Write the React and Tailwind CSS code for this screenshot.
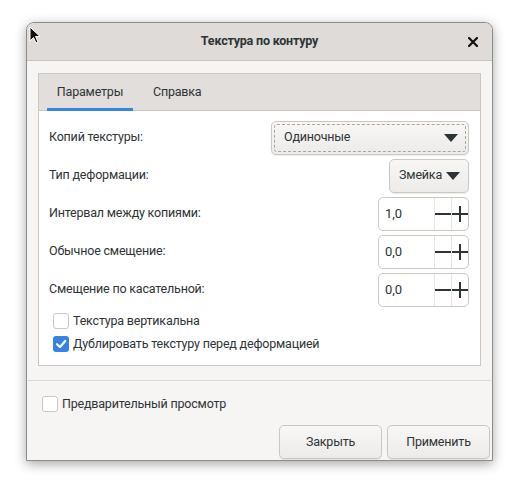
import React from "react";

const font = { fontFamily: 'Roboto, "Noto Sans", sans-serif' };

function Arrow() {
  return (
    <svg width="14" height="8" viewBox="0 0 14 8"><path d="M0 0 L14 0 L7 8 Z" fill="#2e3436" /></svg>
  );
}

function Spin({ value }) {
  return (
    <div className="flex h-[34px] w-[91px] rounded-[5px] border border-[#cdc7c2] bg-white overflow-hidden">
      <div className="flex-1 flex items-center pl-[6px] text-[13px] text-[#2e3436]">{value}</div>
      <div className="w-[17px] border-l border-[#e6e3e0] flex items-center justify-center">
        <svg width="16" height="16" viewBox="0 0 16 16"><rect x="0" y="7" width="16" height="2" fill="#2e3436" /></svg>
      </div>
      <div className="w-[17px] border-l border-[#e6e3e0] flex items-center justify-center">
        <svg width="16" height="16" viewBox="0 0 16 16"><rect x="0" y="7" width="16" height="2" fill="#2e3436" /><rect x="7" y="0" width="2" height="16" fill="#2e3436" /></svg>
      </div>
    </div>
  );
}

function Row({ label, children }) {
  return (
    <div className="flex items-center justify-between h-[33px]">
      <span className="text-[12.5px] tracking-[-0.2px] text-[#2e3436]">{label}</span>
      {children}
    </div>
  );
}

function Check({ checked, label }) {
  return (
    <div className="flex items-center gap-[4px] h-[20px]">
      {checked ? (
        <div className="w-[16px] h-[16px] rounded-[3px] bg-[#3584e4] flex items-center justify-center">
          <svg width="12" height="12" viewBox="0 0 12 12"><path d="M2 6.2 L5 9 L10.2 3" stroke="white" strokeWidth="2.2" fill="none" strokeLinecap="round" strokeLinejoin="round" /></svg>
        </div>
      ) : (
        <div className="w-[16px] h-[16px] rounded-[3px] border border-[#cdc7c2] bg-white" />
      )}
      <span className="text-[12.5px] tracking-[-0.2px] text-[#2e3436]">{label}</span>
    </div>
  );
}

export default function App() {
  return (
    <div className="relative w-[518px] h-[489px] bg-white overflow-hidden" style={font}>
      <div className="absolute left-[26px] top-[22px] w-[467px] h-[439px] rounded-t-[8px] border border-[#8e8c89] bg-[#f6f5f4] shadow-[0_3px_12px_rgba(0,0,0,0.35)] flex flex-col overflow-hidden">
        <div className="relative h-[38px] bg-[#dedbd8] border-b border-[#c8c4c0] flex items-center justify-center shrink-0">
          <span className="text-[12.5px] tracking-[-0.2px] font-bold text-[#2e3436]">Текстура по контуру</span>
          <svg className="absolute right-[14px] top-[14px]" width="10" height="10" viewBox="0 0 10 10">
            <path d="M1 1 L9 9 M9 1 L1 9" stroke="#111" strokeWidth="2.2" strokeLinecap="square" />
          </svg>
        </div>
        <div className="pt-[12px] px-[11px]">
          <div className="h-[293px] border border-[#cdc7c2] bg-white flex flex-col">
            <div className="h-[37px] bg-[#e1dedb] border-b border-[#cdc7c2] flex pl-[8px] shrink-0">
              <div className="relative w-[86px] flex items-center justify-center text-[12.5px] tracking-[-0.2px] text-[#2e3436]">
                Параметры
                <div className="absolute left-0 right-0 bottom-[-1px] h-[3px] bg-[#3584e4]" />
              </div>
              <div className="flex items-center pl-[20px] text-[12.5px] tracking-[-0.2px] text-[#2e3436]">Справка</div>
            </div>
            <div className="pt-[10px] pl-[10px] pr-[11px] flex flex-col gap-[5px]">
              <Row label="Копий текстуры:">
                <div className="w-[198px] h-[34px] rounded-[5px] border border-[#cdc7c2] bg-gradient-to-b from-[#f8f7f6] to-[#edebe9] shadow-[0_1px_1px_rgba(0,0,0,0.08)] p-[2px]">
                  <div className="h-full rounded-[3px] border border-dashed border-[#a8a5a2] flex items-center justify-between pl-[9px] pr-[7px] text-[12.5px] tracking-[-0.2px] text-[#2e3436]">
                    Одиночные
                    <Arrow />
                  </div>
                </div>
              </Row>
              <Row label="Тип деформации:">
                <div className="w-[80px] h-[34px] rounded-[5px] border border-[#cdc7c2] bg-gradient-to-b from-[#f8f7f6] to-[#edebe9] shadow-[0_1px_1px_rgba(0,0,0,0.08)] flex items-center justify-end gap-[4px] pr-[8px] text-[12.5px] tracking-[-0.2px] text-[#2e3436]">
                  Змейка
                  <Arrow />
                </div>
              </Row>
              <Row label="Интервал между копиями:"><Spin value="1,0" /></Row>
              <Row label="Обычное смещение:"><Spin value="0,0" /></Row>
              <Row label="Смещение по касательной:"><Spin value="0,0" /></Row>
              <div className="flex flex-col gap-[3px] pl-[4px]">
                <Check label="Текстура вертикальна" />
                <Check checked label="Дублировать текстуру перед деформацией" />
              </div>
            </div>
          </div>
        </div>
        <div className="mt-[14px] mx-[1px] h-px bg-[#dcd8d4]" />
        <div className="pl-[15px] pt-[13px]">
          <Check label="Предварительный просмотр" />
        </div>
        <div className="flex justify-end gap-[5px] pr-[2px] pt-[11px]">
          {["Закрыть", "Применить"].map((t) => (
            <div key={t} className="w-[103px] h-[34px] rounded-[5px] border border-[#cdc7c2] bg-gradient-to-b from-[#f8f7f6] to-[#edebe9] shadow-[0_1px_1px_rgba(0,0,0,0.08)] flex items-center justify-center text-[12.5px] tracking-[-0.2px] text-[#2e3436]">
              {t}
            </div>
          ))}
        </div>
      </div>
      <svg className="absolute left-[29px] top-[26px]" width="12" height="18" viewBox="0 0 12 18">
        <path d="M1 1 L1 15 L4.5 11.5 L7 17 L9 16 L6.5 10.5 L11 10.5 Z" fill="#111" stroke="#fff" strokeWidth="1" />
      </svg>
    </div>
  );
}
